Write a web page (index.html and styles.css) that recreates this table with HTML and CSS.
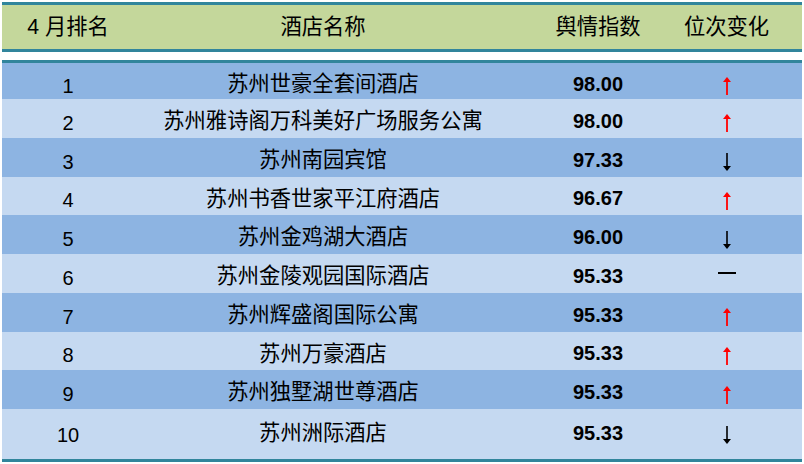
FILE: index.html
```html
<!DOCTYPE html>
<html lang="zh">
<head>
<meta charset="utf-8">
<link rel="stylesheet" href="styles.css">
</head>
<body>
<div class="table">
  <div class="head">
    <div class="cell">4 月排名</div>
    <div class="cell">酒店名称</div>
    <div class="cell">舆情指数</div>
    <div class="cell">位次变化</div>
  </div>
  <div class="body">
    <div class="row dark first"><div class="cell rank">1</div><div class="cell name">苏州世豪全套间酒店</div><div class="cell score">98.00</div><div class="cell chg"><svg class="up" width="12" height="20" viewBox="0 0 12 20"><path d="M6 1 L2 6 L10 6 Z" fill="#f00"/><rect x="5.1" y="4" width="1.8" height="15" fill="#f00"/></svg></div></div>
    <div class="row light"><div class="cell rank">2</div><div class="cell name">苏州雅诗阁万科美好广场服务公寓</div><div class="cell score">98.00</div><div class="cell chg"><svg class="up" width="12" height="20" viewBox="0 0 12 20"><path d="M6 1 L2 6 L10 6 Z" fill="#f00"/><rect x="5.1" y="4" width="1.8" height="15" fill="#f00"/></svg></div></div>
    <div class="row dark"><div class="cell rank">3</div><div class="cell name">苏州南园宾馆</div><div class="cell score">97.33</div><div class="cell chg"><svg class="down" width="12" height="20" viewBox="0 0 12 20"><rect x="5.2" y="1" width="1.6" height="15" fill="#000"/><path d="M6 19 L2 14 L10 14 Z" fill="#000"/></svg></div></div>
    <div class="row light"><div class="cell rank">4</div><div class="cell name">苏州书香世家平江府酒店</div><div class="cell score">96.67</div><div class="cell chg"><svg class="up" width="12" height="20" viewBox="0 0 12 20"><path d="M6 1 L2 6 L10 6 Z" fill="#f00"/><rect x="5.1" y="4" width="1.8" height="15" fill="#f00"/></svg></div></div>
    <div class="row dark"><div class="cell rank">5</div><div class="cell name">苏州金鸡湖大酒店</div><div class="cell score">96.00</div><div class="cell chg"><svg class="down" width="12" height="20" viewBox="0 0 12 20"><rect x="5.2" y="1" width="1.6" height="15" fill="#000"/><path d="M6 19 L2 14 L10 14 Z" fill="#000"/></svg></div></div>
    <div class="row light"><div class="cell rank">6</div><div class="cell name">苏州金陵观园国际酒店</div><div class="cell score">95.33</div><div class="cell chg"><svg class="flat" width="18" height="4" viewBox="0 0 18 4"><rect x="0" y="1" width="18" height="2" fill="#000"/></svg></div></div>
    <div class="row dark"><div class="cell rank">7</div><div class="cell name">苏州辉盛阁国际公寓</div><div class="cell score">95.33</div><div class="cell chg"><svg class="up" width="12" height="20" viewBox="0 0 12 20"><path d="M6 1 L2 6 L10 6 Z" fill="#f00"/><rect x="5.1" y="4" width="1.8" height="15" fill="#f00"/></svg></div></div>
    <div class="row light"><div class="cell rank">8</div><div class="cell name">苏州万豪酒店</div><div class="cell score">95.33</div><div class="cell chg"><svg class="up" width="12" height="20" viewBox="0 0 12 20"><path d="M6 1 L2 6 L10 6 Z" fill="#f00"/><rect x="5.1" y="4" width="1.8" height="15" fill="#f00"/></svg></div></div>
    <div class="row dark"><div class="cell rank">9</div><div class="cell name">苏州独墅湖世尊酒店</div><div class="cell score">95.33</div><div class="cell chg"><svg class="up" width="12" height="20" viewBox="0 0 12 20"><path d="M6 1 L2 6 L10 6 Z" fill="#f00"/><rect x="5.1" y="4" width="1.8" height="15" fill="#f00"/></svg></div></div>
    <div class="row light last"><div class="cell rank">10</div><div class="cell name">苏州洲际酒店</div><div class="cell score">95.33</div><div class="cell chg"><svg class="down" width="12" height="20" viewBox="0 0 12 20"><rect x="5.2" y="1" width="1.6" height="15" fill="#000"/><path d="M6 19 L2 14 L10 14 Z" fill="#000"/></svg></div></div>
  </div>
</div>
</body>
</html>
```

FILE: styles.css
```css
* { box-sizing: border-box; }
html, body { margin: 0; padding: 0; background: #ffffff; }
body {
  font-family: "Liberation Sans", "Noto Sans CJK SC", sans-serif;
  color: #000;
}
.table {
  width: 800px;
  margin: 2px 0 0 2px;
}
.head, .row {
  display: grid;
  grid-template-columns: 132px 378px 172px 85px 33px;
}
.head {
  height: 50px;
  background: #c4d79b;
  border-top: 3px solid #31859c;
  border-bottom: 3px solid #31859c;
  font-size: 21.3px;
}
.head .cell {
  padding-top: 1px;
}
.cell {
  display: flex;
  align-items: center;
  justify-content: center;
  white-space: nowrap;
  line-height: 1.2;
}
.body {
  margin-top: 8px;
  border-top: 3px solid #31859c;
  border-bottom: 3px solid #31859c;
}
.row { height: 38.75px; }
.row.first { height: 36px; }
.row.last { height: 50px; padding-bottom: 8px; }
.dark { background: #8db4e2; }
.light { background: #c5d9f1; }
.rank { font-size: 20px; padding-top: 9px; }
.name { font-size: 21.3px; padding-top: 7px; }
.score { font-size: 20px; font-weight: bold; padding-top: 5px; }
.chg svg { display: block; }
.chg .up, .chg .down { margin-top: 10px; }
```
